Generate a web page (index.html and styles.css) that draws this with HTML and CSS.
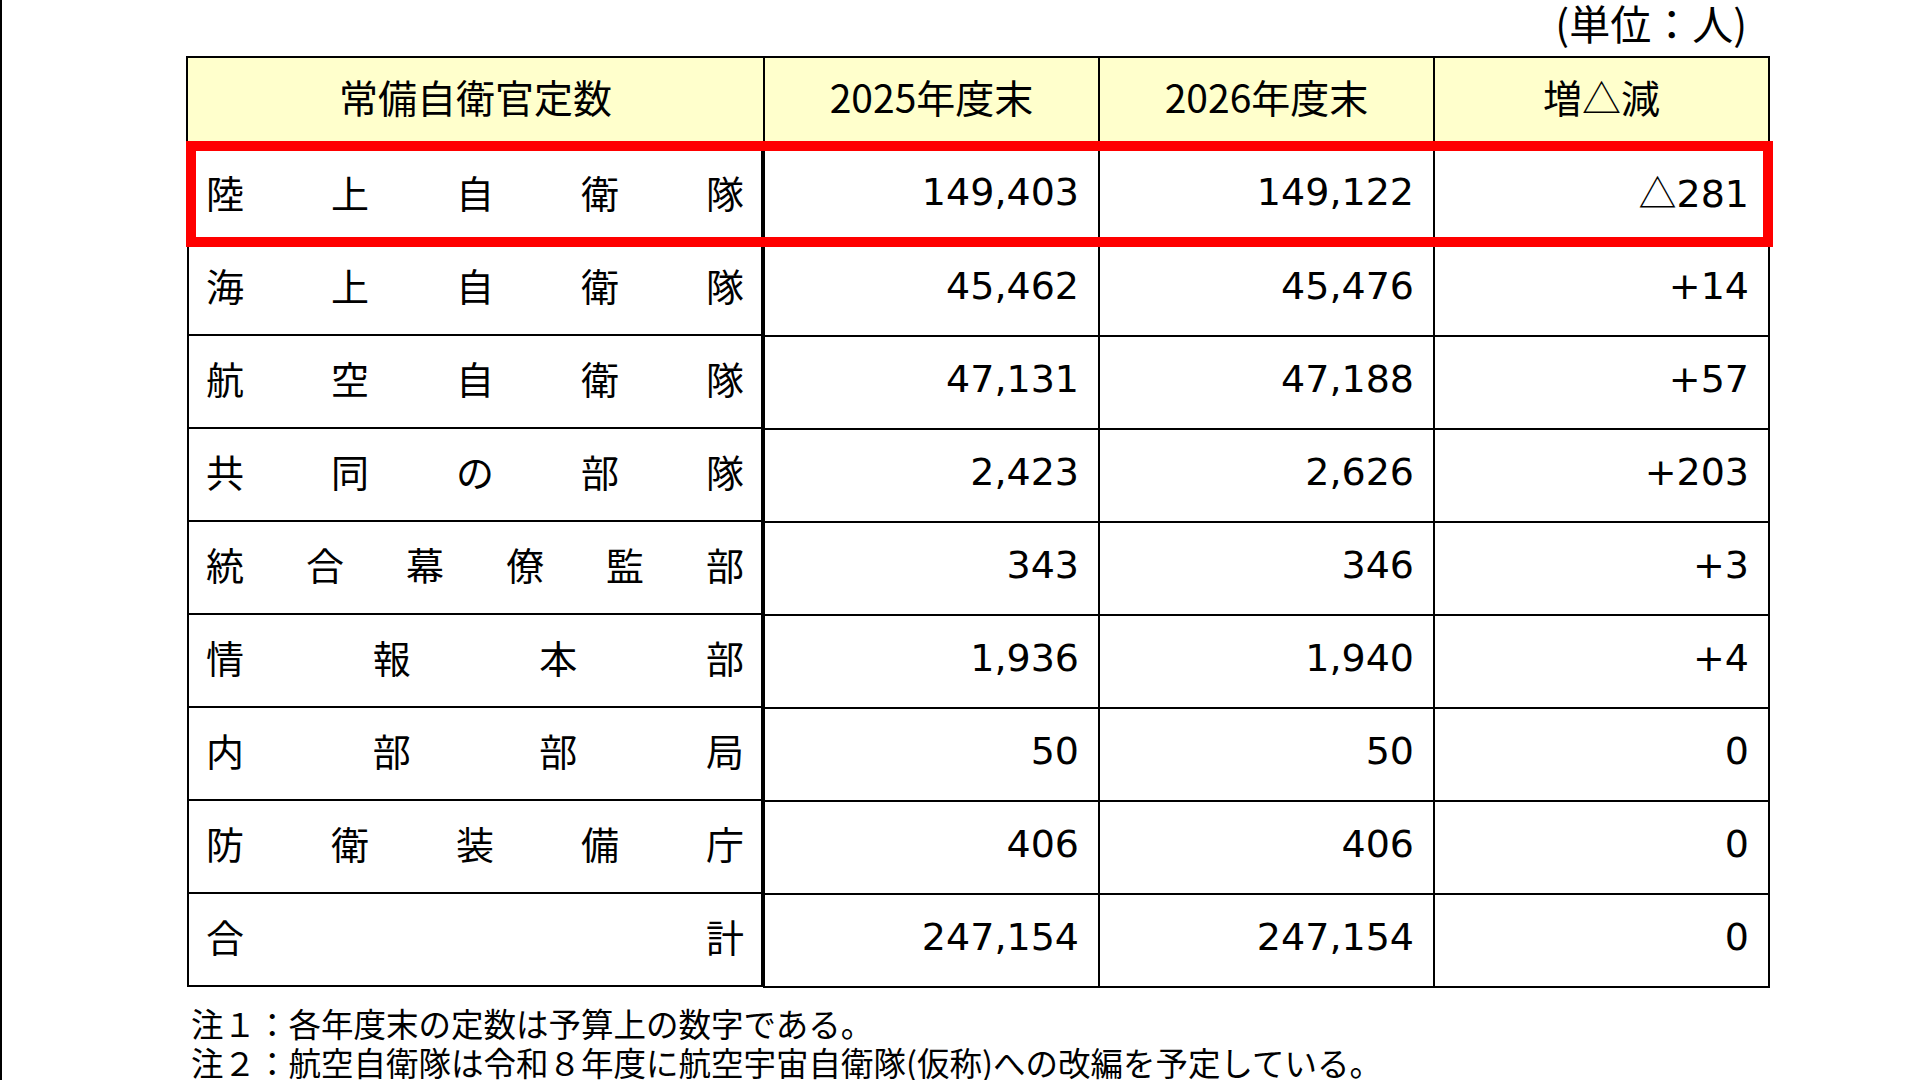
FILE: index.html
```html
<!DOCTYPE html>
<html lang="ja">
<head>
<meta charset="utf-8">
<title>常備自衛官定数</title>
<link rel="stylesheet" href="styles.css">
</head>
<body>
<div class="page">
  <div class="content">
    <div class="unit">(単位：人)</div>
    <div class="table-wrap">
      <table class="quota">
        <colgroup>
          <col class="c-label"><col class="c-num"><col class="c-num"><col class="c-num">
        </colgroup>
        <thead>
          <tr>
            <th>常備自衛官定数</th>
            <th>2025年度末</th>
            <th>2026年度末</th>
            <th>増△減</th>
          </tr>
        </thead>
        <tbody>
          <tr>
            <td class="label"><span>陸</span><span>上</span><span>自</span><span>衛</span><span>隊</span></td>
            <td class="num">149,403</td><td class="num">149,122</td><td class="num"><span class="tri">△</span>281</td>
          </tr>
          <tr>
            <td class="label"><span>海</span><span>上</span><span>自</span><span>衛</span><span>隊</span></td>
            <td class="num">45,462</td><td class="num">45,476</td><td class="num">+14</td>
          </tr>
          <tr>
            <td class="label"><span>航</span><span>空</span><span>自</span><span>衛</span><span>隊</span></td>
            <td class="num">47,131</td><td class="num">47,188</td><td class="num">+57</td>
          </tr>
          <tr>
            <td class="label"><span>共</span><span>同</span><span>の</span><span>部</span><span>隊</span></td>
            <td class="num">2,423</td><td class="num">2,626</td><td class="num">+203</td>
          </tr>
          <tr>
            <td class="label"><span>統</span><span>合</span><span>幕</span><span>僚</span><span>監</span><span>部</span></td>
            <td class="num">343</td><td class="num">346</td><td class="num">+3</td>
          </tr>
          <tr>
            <td class="label"><span>情</span><span>報</span><span>本</span><span>部</span></td>
            <td class="num">1,936</td><td class="num">1,940</td><td class="num">+4</td>
          </tr>
          <tr>
            <td class="label"><span>内</span><span>部</span><span>部</span><span>局</span></td>
            <td class="num">50</td><td class="num">50</td><td class="num">0</td>
          </tr>
          <tr>
            <td class="label"><span>防</span><span>衛</span><span>装</span><span>備</span><span>庁</span></td>
            <td class="num">406</td><td class="num">406</td><td class="num">0</td>
          </tr>
          <tr>
            <td class="label"><span>合</span><span>計</span></td>
            <td class="num">247,154</td><td class="num">247,154</td><td class="num">0</td>
          </tr>
        </tbody>
      </table>
      <div class="highlight"></div>
    </div>
    <div class="notes">
      <p>注１：各年度末の定数は予算上の数字である。</p>
      <p>注２：航空自衛隊は令和８年度に航空宇宙自衛隊(仮称)への改編を予定している。</p>
    </div>
  </div>
</div>
</body>
</html>
```

FILE: styles.css
```css
html, body {
  margin: 0;
  padding: 0;
  background: #ffffff;
}

.page {
  height: 1080px;
  border-left: 2px solid #000000;
  box-sizing: border-box;
  overflow: hidden;
  font-family: "Noto Sans CJK JP", "Noto Sans", sans-serif;
  color: #000000;
}

.content {
  width: 1582px;
  margin-left: 184px;
}

.unit {
  height: 56px;
  box-sizing: border-box;
  text-align: right;
  font-size: 41px;
  line-height: 44px;
  padding-right: 21px;
}

.table-wrap {
  position: relative;
}

.quota {
  border-collapse: collapse;
  table-layout: fixed;
  width: 1582px;
}

.c-label { width: 577px; }
.c-num { width: 335px; }

.quota th,
.quota td {
  border: 2px solid #000000;
  height: 93px;
  box-sizing: border-box;
  padding: 0;
}

.quota th {
  height: 92px;
  padding-bottom: 14px;
  background: #ffffcc;
  font-weight: normal;
  font-size: 39px;
  text-align: center;
  vertical-align: middle;
}

.quota td.label {
  display: flex;
  justify-content: space-between;
  align-items: center;
  padding: 0 17px 8px 17px;
  font-size: 38px;
  border-width: 0 2px 2px 2px;
}

.quota td.num {
  text-align: right;
  padding: 0 19px 8px 0;
  font-family: "DejaVu Sans", "Noto Sans CJK JP", sans-serif;
  font-size: 38px;
  line-height: 44px;
  vertical-align: middle;
}

.tri {
  font-family: "Noto Sans CJK JP", sans-serif;
  font-size: 38px;
  line-height: 44px;
}

.highlight {
  position: absolute;
  left: 0;
  top: 85px;
  width: 1587px;
  height: 106px;
  border: 10px solid #ff0000;
  box-sizing: border-box;
  pointer-events: none;
}

.notes {
  margin-top: 15px;
  padding-left: 5px;
  font-size: 32.5px;
  line-height: 39px;
}

.notes p {
  margin: 0;
}
```
